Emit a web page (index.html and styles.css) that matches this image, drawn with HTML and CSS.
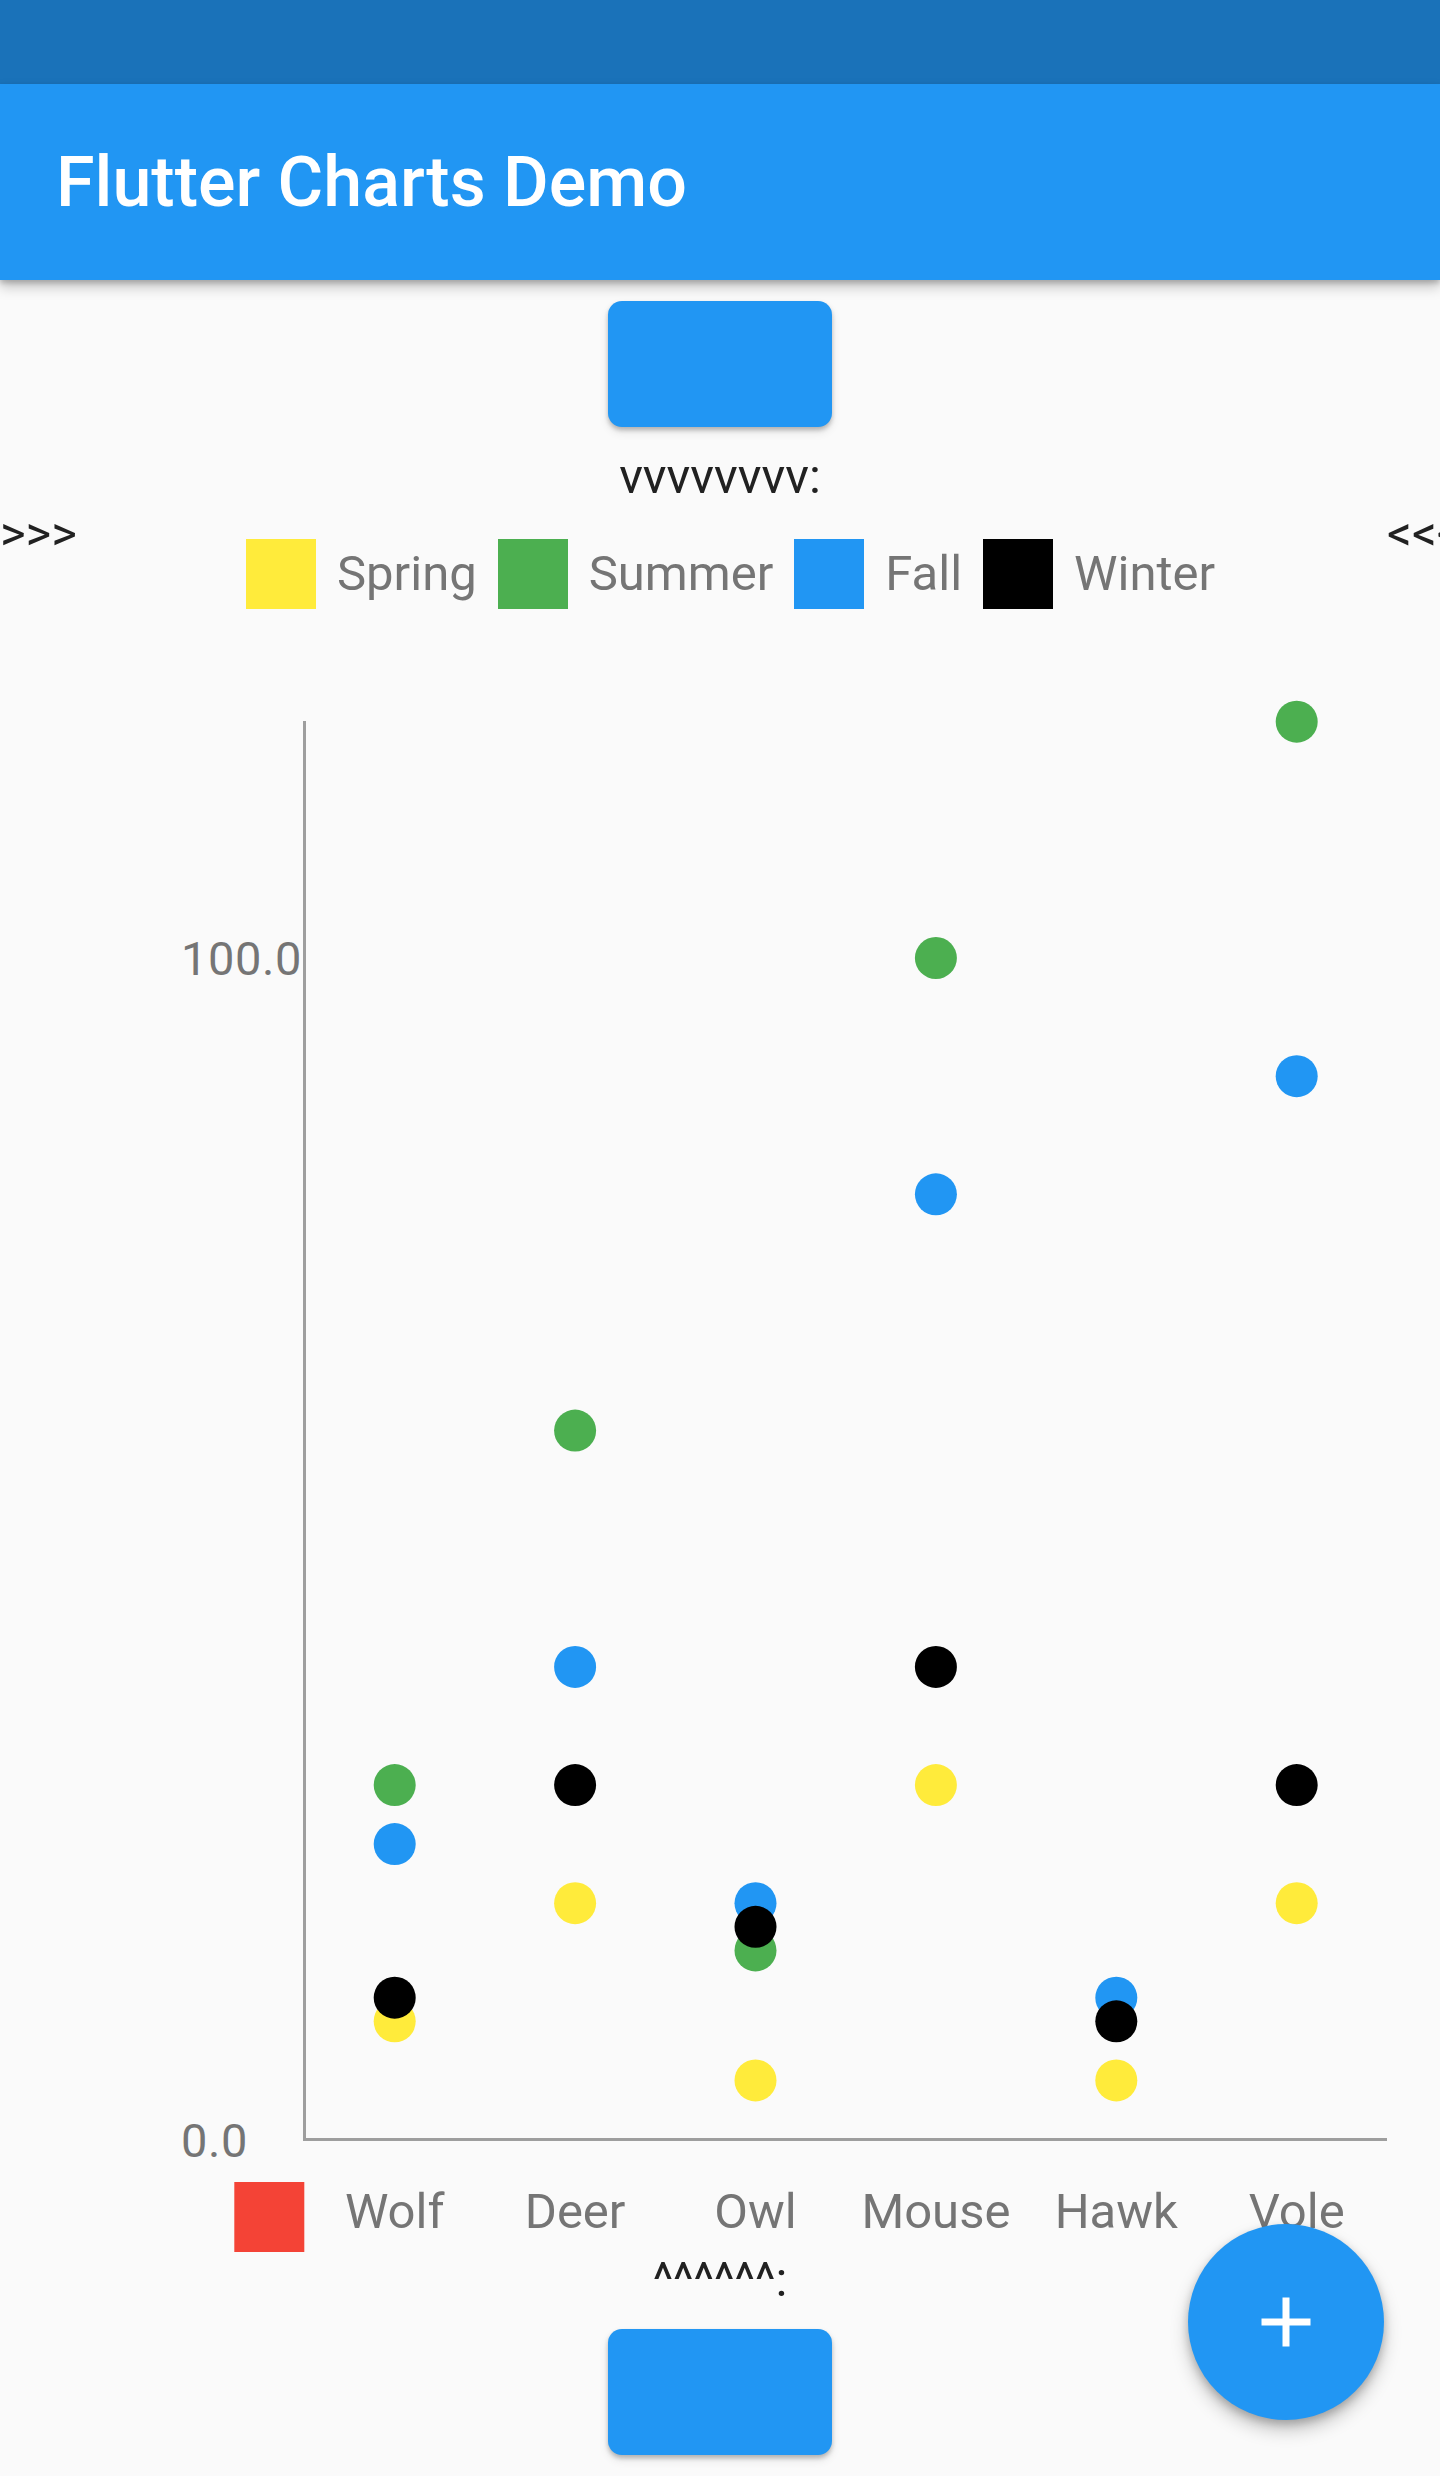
FILE: index.html
```html
<!DOCTYPE html>
<html lang="en">
<head>
<meta charset="utf-8">
<title>Flutter Charts Demo</title>
<link rel="stylesheet" href="styles.css">
</head>
<body>
<div class="screen">
  <div class="status"></div>
  <header class="appbar"><h1 class="title">Flutter Charts Demo</h1></header>
  <main class="content">
    <button class="btn" type="button"></button>
    <p class="caption">vvvvvvvv:</p>
    <div class="chart-row">
      <div class="side side-left">&gt;&gt;&gt;</div>
      <div class="chart">
        <div class="legend">
          <span class="swatch swatch-spring"></span><span class="legend-label">Spring</span>
          <span class="swatch swatch-summer"></span><span class="legend-label">Summer</span>
          <span class="swatch swatch-fall"></span><span class="legend-label">Fall</span>
          <span class="swatch swatch-winter"></span><span class="legend-label">Winter</span>
        </div>
        <svg class="plot" width="1312" height="1642" viewBox="75 609 1312 1642" xmlns="http://www.w3.org/2000/svg">
          <line class="axis" x1="304.5" y1="721" x2="304.5" y2="2141"/>
          <line class="axis" x1="303" y1="2139.5" x2="1387" y2="2139.5"/>
          <text class="measure-label" x="181" y="974.5">100.0</text>
          <text class="measure-label" x="181" y="2156.5">0.0</text>
          <rect x="234.3" y="2182" width="70" height="70" fill="#f44336"/>
          <g class="domain-labels">
            <text x="394.7" y="2228">Wolf</text>
            <text x="575.1" y="2228">Deer</text>
            <text x="755.5" y="2228">Owl</text>
            <text x="935.9" y="2228">Mouse</text>
            <text x="1116.3" y="2228">Hawk</text>
            <text x="1296.7" y="2228">Vole</text>
          </g>
          <!-- Spring: 10,20,5,30,5,20 -->
          <g fill="#ffeb3b">
            <circle cx="394.7" cy="2021.35" r="21"/>
            <circle cx="575.1" cy="1903.2" r="21"/>
            <circle cx="755.5" cy="2080.4" r="21"/>
            <circle cx="935.9" cy="1785.05" r="21"/>
            <circle cx="1116.3" cy="2080.4" r="21"/>
            <circle cx="1296.7" cy="1903.2" r="21"/>
          </g>
          <!-- Summer: 30,60,16,100,-,120 -->
          <g fill="#4caf50">
            <circle cx="394.7" cy="1785.05" r="21"/>
            <circle cx="575.1" cy="1430.6" r="21"/>
            <circle cx="755.5" cy="1950.46" r="21"/>
            <circle cx="935.9" cy="958" r="21"/>
            <circle cx="1296.7" cy="721.7" r="21"/>
          </g>
          <!-- Fall: 25,40,20,80,12,90 -->
          <g fill="#2196f3">
            <circle cx="394.7" cy="1844.1" r="21"/>
            <circle cx="575.1" cy="1666.9" r="21"/>
            <circle cx="755.5" cy="1903.2" r="21"/>
            <circle cx="935.9" cy="1194.3" r="21"/>
            <circle cx="1116.3" cy="1997.7" r="21"/>
            <circle cx="1296.7" cy="1076.15" r="21"/>
          </g>
          <!-- Winter: 12,30,18,40,10,30 -->
          <g fill="#000000">
            <circle cx="394.7" cy="1997.7" r="21"/>
            <circle cx="575.1" cy="1785.05" r="21"/>
            <circle cx="755.5" cy="1926.83" r="21"/>
            <circle cx="935.9" cy="1666.9" r="21"/>
            <circle cx="1116.3" cy="2021.35" r="21"/>
            <circle cx="1296.7" cy="1785.05" r="21"/>
          </g>
        </svg>
      </div>
      <div class="side side-right">&lt;&lt;&lt;</div>
    </div>
    <p class="caption">^^^^^^:</p>
    <button class="btn" type="button"></button>
  </main>
  <button class="fab" type="button" aria-label="Add">
    <svg class="fab-icon" viewBox="0 0 24 24" width="84" height="84" xmlns="http://www.w3.org/2000/svg"><path d="M19 13h-6v6h-2v-6H5v-2h6V5h2v6h6v2z" fill="#ffffff"/></svg>
  </button>
</div>
</body>
</html>
```

FILE: styles.css
```css
html, body {
  margin: 0;
  padding: 0;
}

body {
  background: #fafafa;
  font-family: Roboto, "Noto Sans", "Liberation Sans", sans-serif;
}

.screen {
  position: relative;
  width: 1440px;
  height: 2476px;
  overflow: hidden;
  background: #fafafa;
}

.status {
  height: 84px;
  background: #1a72b9;
}

.appbar {
  position: relative;
  z-index: 2;
  height: 196px;
  background: #2196f3;
  display: flex;
  align-items: center;
  padding-left: 56px;
  box-shadow: 0 7px 12px rgba(0, 0, 0, 0.22), 0 3px 5px rgba(0, 0, 0, 0.18);
}

.title {
  margin: 0;
  color: #ffffff;
  font-size: 70px;
  font-weight: 500;
  line-height: 82px;
  letter-spacing: 0;
}

.content {
  display: block;
}

.btn {
  display: block;
  width: 224px;
  height: 126px;
  margin: 21px auto;
  padding: 0;
  border: none;
  border-radius: 14px;
  background: #2196f3;
  box-shadow: 0 3px 4px rgba(0, 0, 0, 0.22), 0 5px 10px rgba(0, 0, 0, 0.1);
}

.caption {
  margin: 0;
  text-align: center;
  font-size: 49px;
  line-height: 57.4px;
  color: #212121;
}

.chart-row {
  display: flex;
  align-items: flex-start;
}

.side {
  font-size: 49px;
  line-height: 57.4px;
  color: #212121;
  white-space: nowrap;
  flex: none;
}

.side-left {
  width: 75px;
}

.chart {
  width: 1312px;
  flex: none;
}

.legend {
  display: flex;
  align-items: center;
  height: 70px;
  margin-top: 33.6px;
  padding-left: 171px;
}

.swatch {
  width: 70px;
  height: 70px;
  flex: none;
}

.swatch-spring { background: #ffeb3b; }
.swatch-summer { background: #4caf50; }
.swatch-fall { background: #2196f3; }
.swatch-winter { background: #000000; }

.legend-label {
  margin: 0 21px;
  font-size: 49px;
  line-height: 57.4px;
  color: #757575;
  white-space: nowrap;
}

.plot {
  display: block;
  overflow: visible;
}

.axis {
  stroke: #9e9e9e;
  stroke-width: 3;
}

.measure-label {
  font-family: Roboto, "Noto Sans", sans-serif;
  font-size: 47px;
  fill: #757575;
  letter-spacing: 0.6px;
}

.domain-labels text {
  font-family: Roboto, "Noto Sans", sans-serif;
  font-size: 49px;
  fill: #757575;
  text-anchor: middle;
}

.fab {
  position: absolute;
  right: 56px;
  bottom: 56px;
  width: 196px;
  height: 196px;
  padding: 0;
  border: none;
  border-radius: 50%;
  background: #2196f3;
  display: flex;
  align-items: center;
  justify-content: center;
  box-shadow: 0 10px 18px rgba(0, 0, 0, 0.22), 0 4px 8px rgba(0, 0, 0, 0.2);
}

.fab-icon {
  display: block;
}
```
